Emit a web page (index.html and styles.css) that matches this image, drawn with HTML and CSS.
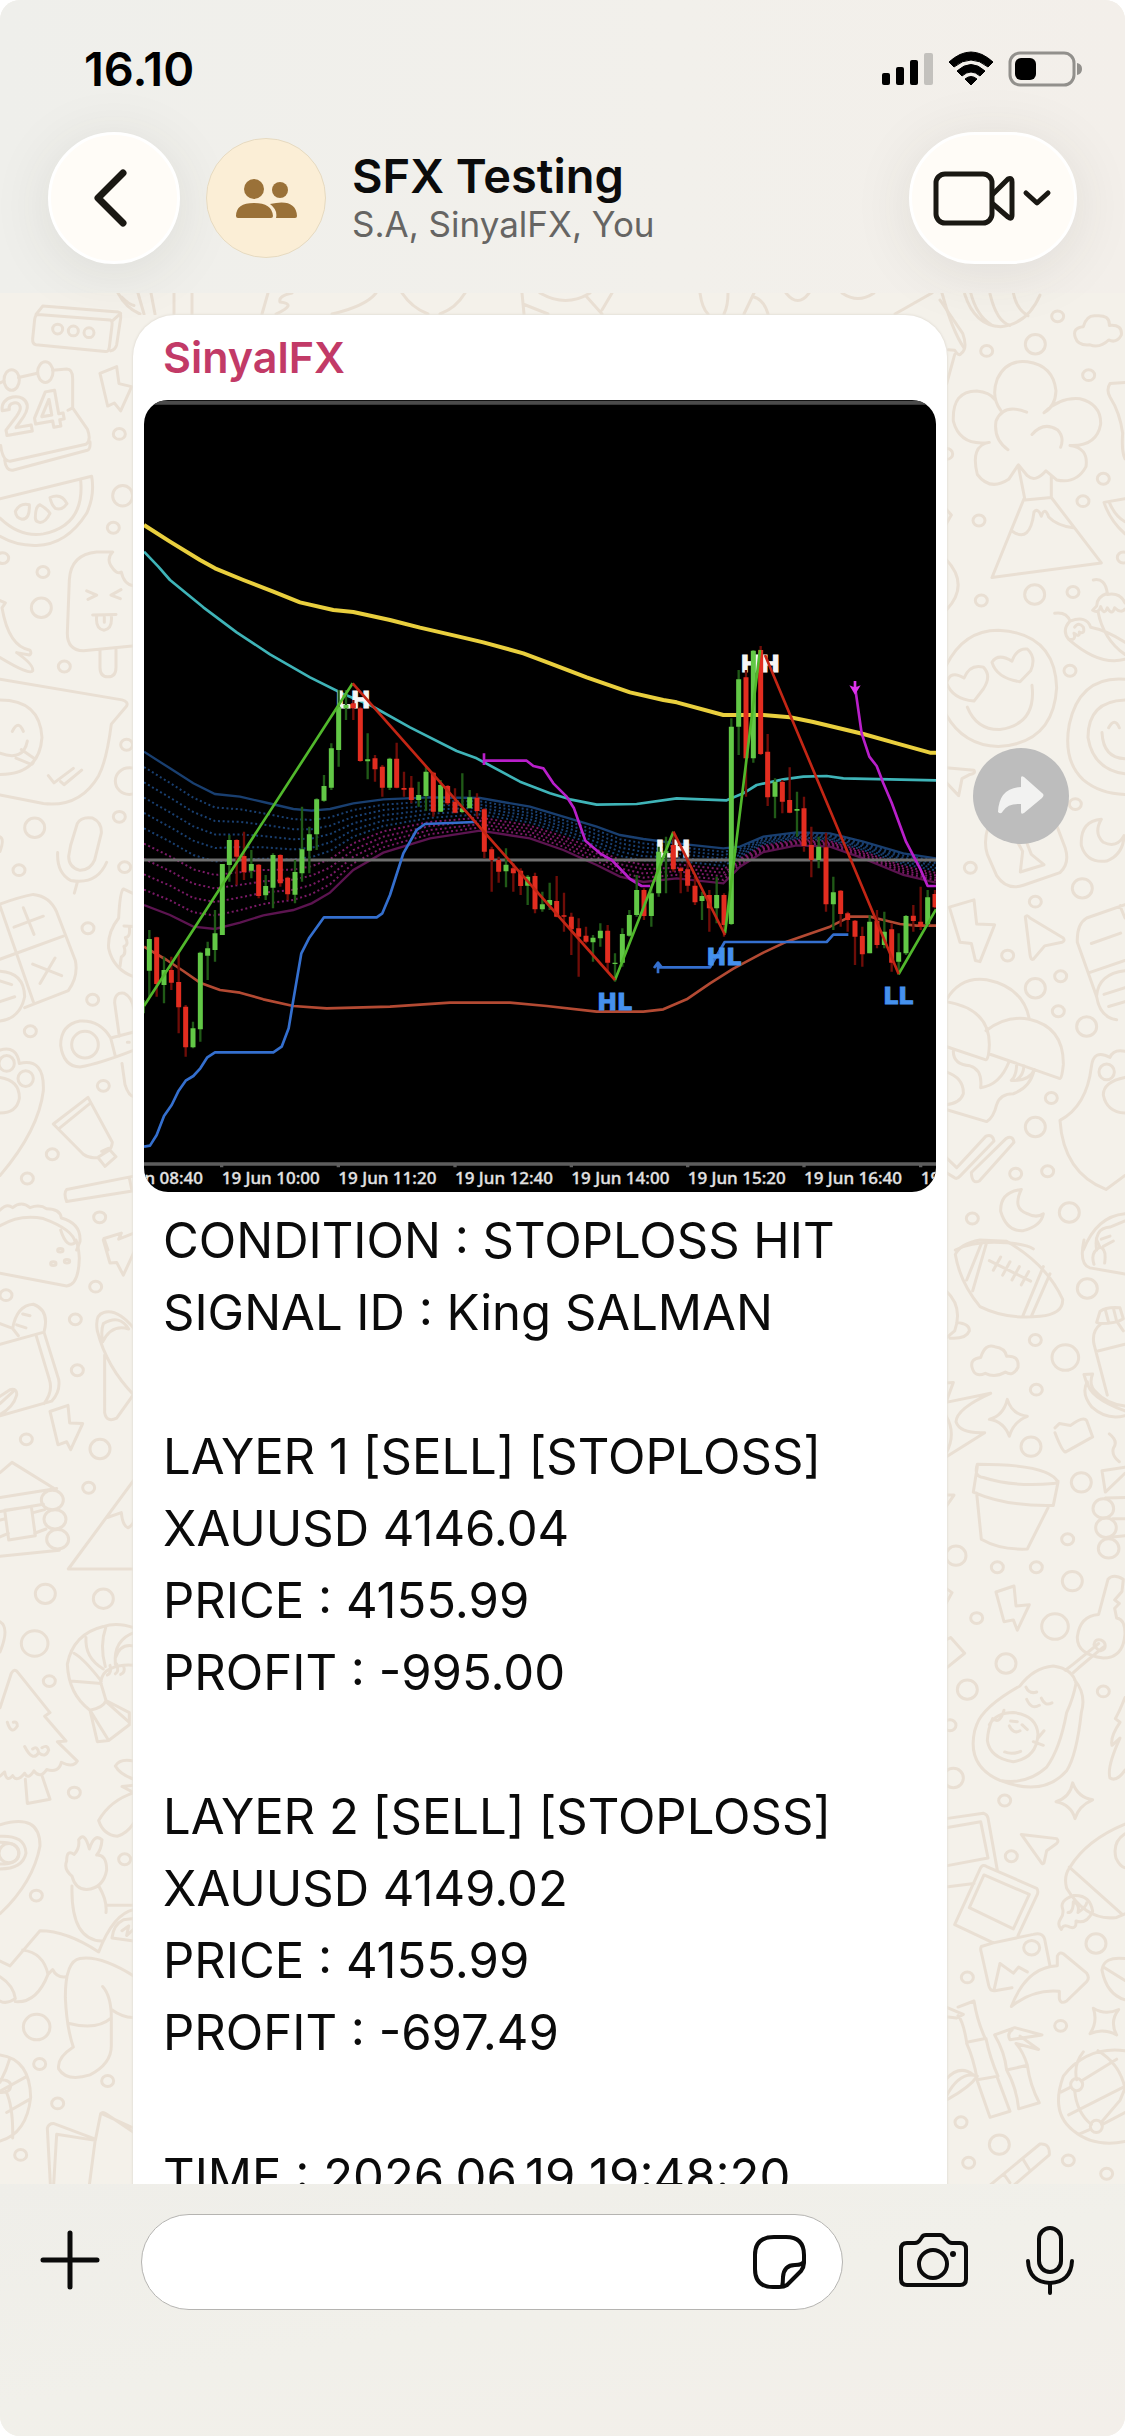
FILE: index.html
```html
<!DOCTYPE html>
<html lang="en">
<head>
<meta charset="utf-8">
<meta name="viewport" content="width=device-width, initial-scale=1">
<title>SFX Testing</title>
<link rel="stylesheet" href="styles.css">
<script src="chart.js" defer></script>
</head>
<body>
<div class="screen">
  <header class="top">
    <div class="status">
      <time class="clock">16.10</time>
      <svg class="status-icons" width="204" height="36" viewBox="881 51 204 36" aria-hidden="true">
        <rect x="882" y="73" width="8" height="12" rx="2"/>
        <rect x="896" y="67" width="8" height="18" rx="2"/>
        <rect x="910" y="60" width="8" height="25" rx="2"/>
        <rect x="924" y="53" width="9" height="32" rx="2" fill="#c3c1bd"/>
        <path d="M949 62Q971 42 993 62L988 67Q971 53 954 67ZM957 71Q971 58 985 71L980 76Q971 68 962 76ZM965 79Q971 74 977 79L971 85Z" stroke="#000" stroke-width="1" stroke-linejoin="round"/>
        <rect x="1010" y="53" width="64" height="32" rx="10" fill="none" stroke="#92908c" stroke-width="3"/>
        <rect x="1015" y="58" width="21" height="22" rx="6"/>
        <path d="M1077 63q5 1 5 6t-5 6z" fill="#92908c"/>
      </svg>
    </div>
    <div class="bar">
      <button class="glass back" type="button" aria-label="Back">
        <svg width="40" height="64" viewBox="94 166 40 64"><path d="M123 173L98 198L123 223" fill="none" stroke="#1a1813" stroke-width="7" stroke-linecap="round" stroke-linejoin="round"/></svg>
      </button>
      <div class="avatar">
        <svg width="64" height="44" viewBox="234 174 64 44" aria-hidden="true">
          <circle cx="254" cy="187" r="10"/><circle cx="280" cy="188" r="8"/>
          <path d="M236 214Q236 201 254 201T273 214Q273 216 271 216H238Q236 216 236 214ZM270 202Q296 196 297 214Q297 216 295 216H276Q278 208 270 202Z"/>
        </svg>
      </div>
      <div class="who">
        <h1 class="title">SFX Testing</h1>
        <p class="members">S.A, SinyalFX, You</p>
      </div>
      <button class="glass call" type="button" aria-label="Video call">
        <svg width="122" height="60" viewBox="932 168 122 60" fill="none" stroke="#1a1813" stroke-width="5" stroke-linejoin="round" stroke-linecap="round">
          <rect x="936" y="174" width="56" height="49" rx="9"/>
          <path d="M993 194L1008 179Q1012 177 1012 182V215Q1012 220 1008 217L993 204"/>
          <path d="M1026 193L1037 203L1048 193"/>
        </svg>
      </button>
    </div>
  </header>

  <main class="chat">
    <svg class="doodle doodle-left" width="140" height="1891" viewBox="0 293 140 1891" aria-hidden="true">
      <text class="day" x="4" y="436" transform="rotate(-10 4 436)">24</text>
      <g transform="translate(0 300) scale(.3333 .6059)">
        <path d="M104 32Q106 24 114 24L330 33Q338 34 336 42L328 78Q326 86 316 85L108 74Q97 73 98 64ZM108 24L128 10L355 20Q364 21 362 30L350 74Q346 82 332 84M338 34L362 22M365-5Q388 8 402 9"/>
        <ellipse cx="173" cy="48" rx="15" ry="8"/><ellipse cx="220" cy="51" rx="15" ry="8"/><ellipse cx="267" cy="54" rx="15" ry="8"/>
        <path d="M0 137L12 134M56 128L112 121M158 116L200 114Q218 114 218 130V178L262 213Q275 232 258 238L30 266Q8 266 2 240M204 182L218 178M14 264Q18 282 38 281L262 248Q272 246 270 234"/>
        <ellipse cx="35" cy="132" rx="23" ry="17"/><ellipse cx="136" cy="119" rx="23" ry="17"/>
        <path d="M300 121L350 110L357 138L395 143L362 183L343 170L323 175ZM0 328L275 291Q285 322 260 352Q200 404 110 405Q50 406 0 390M0 360Q60 392 130 386Q255 372 242 297"/>
        <path d="M46 349Q60 334 88 338Q90 362 66 362Q48 360 46 349ZM106 360Q106 340 120 338Q142 345 150 352Q136 368 118 367Q106 366 106 360ZM150 326Q184 318 201 336Q186 348 166 344Q154 338 150 326Z"/>
        <path d="M338 416H290Q212 420 208 462L202 550Q202 578 250 579L420 570M338 416Q320 426 332 438Q350 454 364 449Q372 470 402 472M300 577V606Q300 622 324 622T348 606V577M260 480L290 487L264 494M363 478L333 487L361 493M278 520L348 519M290 522Q286 543 312 545Q338 543 334 521M313 523V532"/>
        <path d="M0 496L16 500L6 508Q26 572 90 578Q96 584 88 586L50 582Q102 602 98 612Q90 620 0 590M0 626L366 660Q386 663 380 670L334 700Q320 760 296 785Q240 838 130 831L0 817M0 660Q120 660 126 722Q118 783 0 783M37 712Q55 692 70 712M0 748Q70 762 82 728M64 742L104 757Q98 770 88 765L48 756M145 785L162 797L220 773M182 795L192 800L245 776"/>
        <path d="M212 900L232 864Q244 852 278 855Q306 862 304 880L284 924Q270 942 238 941Q206 936 206 918ZM173 912Q170 945 212 958Q290 966 320 928M232 961L223 979M0 886Q14 890 0 910"/>
        <path d="M0 997Q60 985 100 981Q150 984 170 1010L226 1090Q236 1116 205 1140L74 1168M0 1088L190 1050M0 1000L100 1158M42 1035L130 1017M70 1003L102 1047M98 1096L185 1115M165 1086L120 1128M0 1108Q72 1110 74 1150Q60 1186 0 1190M0 1124L35 1130M0 1158L44 1150"/>
        <path d="M402 980L370 972Q360 976 356 1020Q322 1044 326 1070Q340 1105 402 1117M372 1033L402 1034M388 1034Q392 1052 376 1052Q388 1064 372 1067Q380 1080 364 1084L360 1100M402 1208L332 1218Q300 1188 240 1190Q182 1196 182 1230Q190 1265 240 1266Q300 1260 402 1238M332 1218L346 1248M358 1215L344 1160Q344 1142 372 1144Q395 1150 402 1170M366 1260L375 1295Q386 1314 402 1315M382 1225H388"/>
        <ellipse cx="255" cy="1229" rx="40" ry="22"/>
        <path d="M0 1238Q50 1230 58 1260Q134 1250 130 1305Q116 1370 0 1445M0 1283Q60 1288 58 1318Q50 1342 0 1342M160 1360L264 1316L337 1390Q336 1400 325 1404L294 1415Q270 1418 250 1410ZM176 1368L270 1326M305 1405L325 1400L348 1414L315 1430L295 1416M402 1446L200 1468Q190 1474 200 1488L402 1470M388 1449L396 1470"/>
        <ellipse cx="20" cy="1260" rx="23" ry="13"/><ellipse cx="77" cy="1285" rx="23" ry="13"/>
        <path d="M0 1502Q20 1490 38 1498Q64 1486 90 1498Q120 1492 140 1500Q180 1500 184 1515Q244 1524 240 1554L230 1568M0 1528Q60 1508 130 1516Q220 1534 226 1556Q200 1566 182 1535M402 1540L356 1550L364 1540L312 1549L324 1568"/>
        <g class="dots">
          <ellipse cx="358" cy="221" rx="18" ry="9"/><ellipse cx="368" cy="323" rx="30" ry="17"/><ellipse cx="340" cy="376" rx="18" ry="9"/><ellipse cx="8" cy="426" rx="18" ry="9"/><ellipse cx="129" cy="449" rx="18" ry="9"/><ellipse cx="124" cy="508" rx="30" ry="16"/><ellipse cx="193" cy="605" rx="18" ry="9"/><ellipse cx="380" cy="734" rx="18" ry="9"/><ellipse cx="388" cy="794" rx="42" ry="22"/><ellipse cx="358" cy="853" rx="18" ry="9"/><ellipse cx="104" cy="871" rx="30" ry="16"/><ellipse cx="57" cy="941" rx="18" ry="9"/><ellipse cx="374" cy="936" rx="18" ry="9"/><ellipse cx="264" cy="1037" rx="18" ry="9"/><ellipse cx="278" cy="1155" rx="18" ry="9"/><ellipse cx="91" cy="1207" rx="18" ry="9"/><ellipse cx="310" cy="1297" rx="18" ry="9"/><ellipse cx="157" cy="1410" rx="18" ry="9"/><ellipse cx="82" cy="1450" rx="18" ry="9"/><ellipse cx="299" cy="1514" rx="18" ry="9"/>
        </g>
      </g>
      <g transform="translate(0 1240) scale(.3333 .6059)">
        <path d="M0 55L200 76Q236 74 238 30Q236 10 228 0M310 0L330 38L350 37L370 58L402 20M0 138L38 146Q50 108 100 106Q150 116 132 152L0 172M38 146L55 158M68 122L90 125M50 140L78 145M132 152L176 230Q182 250 155 266L0 290M108 157L148 230Q160 250 132 270M0 258L30 247Q52 244 50 256Q40 276 0 288M0 270L40 250"/>
        <path d="M150 283L204 273L209 302L248 303L212 346L200 333L174 338ZM402 146Q350 112 310 120Q284 124 292 150Q320 210 402 256M314 190V285Q320 302 350 294L402 254M308 168Q336 138 386 147Q360 122 310 138Q302 150 308 168M402 396L205 543H402M322 458L364 450Q368 472 384 475Q402 470 402 460"/>
        <path d="M0 384L36 367L165 411M0 425L170 410M0 448L130 436M0 462L16 460M100 450L134 445M0 490L25 484M104 484L138 477M0 522L178 512M14 446L94 440L106 488L26 495Z"/>
        <ellipse cx="157" cy="429" rx="33" ry="16"/><ellipse cx="165" cy="461" rx="33" ry="16"/><ellipse cx="173" cy="494" rx="33" ry="16"/>
        <path d="M0 772L34 715Q44 706 54 714L150 780L134 786L198 827L172 828L232 860Q220 872 184 862Q176 880 140 874Q120 890 102 876Q84 892 74 880Q50 896 38 884Q20 896 14 878L0 885M76 890L82 930L150 923L126 884M22 796Q34 818 52 802Q52 794 40 796M74 836Q98 862 116 846Q112 834 98 840M116 846Q136 856 146 842Q142 832 126 838M0 630Q30 640 0 680"/>
        <path d="M402 640Q350 630 310 638Q220 650 202 700Q206 750 270 776L292 828L326 826L388 800V780L318 760L302 730Q306 714 330 708Q360 700 402 702M258 656Q254 690 310 708M318 638Q298 670 316 704M222 682Q250 690 304 728M212 728L304 732M270 776Q310 772 318 760M272 778L326 826M318 762L388 796M402 648Q340 660 346 700M330 702Q336 714 322 718M350 700Q358 712 346 716M370 702Q378 714 362 717M402 670Q360 665 346 690"/>
        <path d="M402 860Q360 855 346 868Q360 882 402 890M402 900L366 902L402 912Q330 925 296 958Q310 982 352 984Q380 980 402 962M0 965Q120 945 120 1000Q100 1060 0 1112M0 984Q76 982 78 1012Q68 1038 0 1038M0 994Q56 994 56 1012T0 1030"/>
        <path d="M216 1050Q190 1038 200 1025Q200 1005 222 1014Q240 1004 236 990Q254 975 268 1005Q284 978 306 990Q304 1006 290 1015Q320 1014 320 1040Q310 1070 260 1072Q226 1072 216 1050ZM216 1066Q212 1155 305 1157M296 1066Q322 1090 318 1110M320 1098L402 1098M402 1105Q340 1112 296 1175Q200 1140 120 1140L30 1198L0 1190M402 1120L370 1122Q340 1130 336 1152L402 1157M366 1140L386 1132L380 1148L400 1138M68 1172Q130 1176 144 1212Q110 1260 46 1257M0 1216Q40 1230 46 1252Q20 1262 0 1256M144 1212L158 1204Q170 1218 198 1216M402 1215Q300 1180 240 1186Q196 1190 196 1250Q200 1300 220 1332Q170 1350 176 1368Q200 1390 270 1378Q334 1360 334 1330V1284Q290 1305 208 1293M308 1232Q334 1248 334 1284M334 1270Q370 1284 402 1283"/>
        <path d="M0 1345Q90 1352 92 1415Q80 1475 0 1487M0 1405L75 1382M20 1440L90 1418M0 1386Q34 1386 32 1397T0 1407M18 1405Q40 1430 38 1482M0 1390Q20 1370 30 1350M152 1568L142 1466Q146 1458 160 1458L286 1484L268 1560M160 1568L170 1476L286 1486L302 1442Q308 1438 318 1442L402 1473M310 1443L402 1466"/>
        <ellipse cx="27" cy="1012" rx="30" ry="16"/>
        <g class="dots">
          <ellipse cx="181" cy="17" rx="8" ry="3"/><ellipse cx="160" cy="39" rx="8" ry="3"/><ellipse cx="201" cy="35" rx="8" ry="3"/><ellipse cx="18" cy="91" rx="18" ry="9"/><ellipse cx="287" cy="77" rx="18" ry="9"/><ellipse cx="226" cy="131" rx="18" ry="9"/><ellipse cx="232" cy="215" rx="18" ry="9"/><ellipse cx="79" cy="329" rx="18" ry="9"/><ellipse cx="300" cy="345" rx="30" ry="16"/><ellipse cx="266" cy="409" rx="18" ry="9"/><ellipse cx="136" cy="584" rx="30" ry="16"/><ellipse cx="310" cy="592" rx="30" ry="16"/><ellipse cx="104" cy="666" rx="40" ry="21"/><ellipse cx="148" cy="728" rx="18" ry="9"/><ellipse cx="223" cy="912" rx="18" ry="9"/><ellipse cx="374" cy="1022" rx="18" ry="9"/><ellipse cx="109" cy="1082" rx="18" ry="9"/><ellipse cx="110" cy="1299" rx="40" ry="21"/><ellipse cx="119" cy="1360" rx="18" ry="9"/><ellipse cx="323" cy="1388" rx="18" ry="9"/><ellipse cx="173" cy="1425" rx="18" ry="9"/><ellipse cx="62" cy="1510" rx="18" ry="9"/>
        </g>
      </g>
    </svg>
    <svg class="doodle doodle-top" width="800" height="22" viewBox="110 293 800 22" aria-hidden="true">
      <path d="M118 293Q126 308 140 314M138 293L144 314M151 293L155 314M174 293V314M192 293V314M268 293L262 314M292 293Q278 296 280 302Q298 304 276 314M376 293Q366 306 332 314M402 293Q412 308 428 314M465 293Q456 308 440 314M522 293L524 314M540 293Q566 308 590 293M523 304L548 314M586 296L602 314M612 293L602 310M700 293Q702 308 708 314M728 293Q728 306 724 314M754 293L744 314M754 297Q764 300 768 314M786 293Q798 308 809 293M842 293Q858 304 874 293"/>
    </svg>
    <svg class="doodle doodle-right" width="235" height="1891" viewBox="890 293 235 1891" aria-hidden="true">
      <path d="M895 314L932 293M942 293Q952 330 964 348"/>
      <g transform="translate(940 300) scale(.3333 .6059)">
        <path d="M0 0L68 55Q84 80 64 88Q56 94 44 83L25 82M44 90L20 138M74-10Q104 42 182 44Q262 40 300-8M92-12Q110 26 152 40M150-10Q170 36 210 42M220-12Q230 16 264 26M406 62Q396 46 430 44Q440 24 468 26Q510 24 508 42Q548 40 544 58Q530 72 506 66Q480 80 450 74Q414 76 406 62Z"/>
        <path d="M182 182Q152 160 172 130Q200 98 262 102Q340 108 348 150Q346 176 312 186Q360 160 420 163Q484 172 482 205Q470 242 390 240Q446 244 438 275Q410 304 350 297L318 282Q286 302 262 290L235 272L206 296Q150 316 112 288Q90 240 148 235Q60 242 40 200Q36 150 110 150Q150 152 164 164M260 185Q190 170 168 200Q160 230 204 247M276 222Q310 200 352 214Q374 226 362 243M235 274L255 330L334 326V290M252 328L156 458L484 434L334 326M218 382Q270 402 282 350Q294 342 304 357Q314 340 326 358Q350 372 400 376M18 428Q90 470 20 511M18 345L34 355L18 370M555 136L510 138Q498 148 510 160Q540 186 548 220Q544 250 555 262M555 328L492 334Q510 364 555 386M508 334Q524 356 555 366"/>
        <path d="M460 462Q496 458 502 484Q470 490 470 505L458 512Q476 518 482 506Q492 522 502 508Q516 522 524 508Q544 518 555 510M502 486Q540 482 555 500M474 514Q490 560 555 585M344 517Q380 514 390 530Q440 520 452 540Q500 545 555 565M390 530Q364 545 386 560Q480 605 555 593M386 560Q410 562 402 550Q420 558 418 548Q436 552 430 540Q416 530 404 540"/>
        <path d="M18 604Q70 545 175 545Q345 550 350 640Q340 732 175 737Q70 735 18 684M20 632Q30 610 72 624Q90 600 130 606Q156 620 130 642L102 662Q36 658 20 632ZM156 598Q174 582 216 596Q230 574 262 576Q290 590 272 612L240 630Q170 624 156 598ZM82 672Q110 710 180 709Q290 700 276 636M555 626Q420 620 388 700Q368 760 430 792Q480 815 555 816M555 660Q444 662 444 722Q460 775 555 782M486 714Q490 756 555 757M506 706Q524 688 538 706M18 772L102 776Q108 782 90 783L66 790L56 818L18 796"/>
        <path d="M144 870Q130 895 142 915L170 950Q200 975 250 966L360 945Q390 930 376 905L352 870M235 897L248 910L241 944L312 932L274 915L262 898M484 857Q420 860 424 900Q440 930 500 926Q550 915 552 884Q530 906 490 895Q460 880 484 857ZM28 1002L102 990L110 1030L164 1031L120 1092L106 1090L94 1062L60 1060ZM256 1018Q262 1014 270 1020L370 1053Q376 1058 366 1060L314 1066L280 1088Q272 1090 270 1080Z"/>
        <path d="M555 998L440 1020Q410 1030 412 1060L470 1150Q480 1184 530 1188M448 1110L555 1090M540 1000L555 1020M454 1062L542 1045M555 1107Q476 1112 470 1148M492 1146L555 1135M506 1166L555 1158M18 1156Q60 1116 140 1122Q250 1134 268 1187M18 1158Q150 1170 148 1230Q146 1254 138 1254L18 1232M138 1206Q200 1180 268 1187Q372 1200 370 1262Q366 1285 360 1285L146 1244M40 1240Q40 1262 90 1264Q128 1270 122 1300Q180 1296 208 1256M230 1260Q230 1280 214 1288Q266 1290 284 1270M252 1264Q250 1280 230 1287M18 1274Q72 1284 70 1310Q60 1326 18 1328M18 1336L140 1356Q160 1350 170 1328Q180 1310 220 1310Q270 1300 282 1272"/>
        <path d="M18 1415L50 1432L138 1380Q158 1376 162 1388L60 1446Q50 1452 42 1448L18 1440M94 1440L198 1384Q218 1378 222 1390L118 1454Q96 1460 94 1440ZM555 1240Q520 1236 510 1250Q460 1235 454 1266Q440 1330 360 1354Q370 1440 498 1468L555 1445M555 1283Q490 1290 490 1312Q500 1340 555 1342M244 1468Q180 1472 182 1504Q200 1538 250 1536Q304 1528 310 1508Q290 1516 262 1508Q216 1500 244 1468ZM46 1568Q100 1552 200 1556Q260 1558 280 1566M430 1568Q470 1512 555 1508M470 1568Q460 1532 510 1530L555 1520M484 1550L510 1545M490 1562L520 1553"/>
        <ellipse cx="500" cy="1274" rx="23" ry="13"/>
        <g class="dots">
          <ellipse cx="353" cy="27" rx="18" ry="9"/><ellipse cx="286" cy="73" rx="30" ry="16"/><ellipse cx="140" cy="84" rx="18" ry="9"/><ellipse cx="446" cy="124" rx="18" ry="9"/><ellipse cx="20" cy="254" rx="18" ry="9"/><ellipse cx="490" cy="295" rx="18" ry="9"/><ellipse cx="429" cy="332" rx="18" ry="9"/><ellipse cx="117" cy="364" rx="18" ry="9"/><ellipse cx="550" cy="425" rx="18" ry="9"/><ellipse cx="399" cy="482" rx="18" ry="9"/><ellipse cx="284" cy="486" rx="30" ry="16"/><ellipse cx="124" cy="496" rx="18" ry="9"/><ellipse cx="390" cy="612" rx="18" ry="9"/><ellipse cx="406" cy="832" rx="18" ry="9"/><ellipse cx="91" cy="937" rx="18" ry="9"/><ellipse cx="427" cy="971" rx="30" ry="16"/><ellipse cx="286" cy="993" rx="18" ry="9"/><ellipse cx="203" cy="1082" rx="18" ry="9"/><ellipse cx="362" cy="1116" rx="18" ry="9"/><ellipse cx="286" cy="1136" rx="30" ry="16"/><ellipse cx="355" cy="1174" rx="18" ry="9"/><ellipse cx="440" cy="1199" rx="30" ry="16"/><ellipse cx="334" cy="1317" rx="18" ry="9"/><ellipse cx="286" cy="1365" rx="30" ry="16"/><ellipse cx="227" cy="1442" rx="18" ry="9"/><ellipse cx="323" cy="1438" rx="18" ry="9"/><ellipse cx="97" cy="1516" rx="18" ry="9"/><ellipse cx="388" cy="1506" rx="30" ry="16"/>
        </g>
      </g>
      <g transform="translate(940 1240) scale(.3333 .6059)">
        <path d="M46 24Q60 6 120 0L200 2Q320 40 368 98Q370 122 300 126Q200 132 120 110Q60 70 46 24ZM124 6L80 66M140 4L98 84M310 44L248 126M330 56L274 126M148 34L272 68M182 28L160 50M210 36L188 58M238 44L216 66M266 52L244 74M18 84Q70 110 44 150L18 162M50 136Q90 138 88 150Q78 164 30 162M432 0Q416 40 450 46L555 56M462 40Q450 20 480 12L470 0M480 12Q500 14 494 38M96 210Q90 196 122 194Q136 170 164 176Q196 178 200 192Q238 190 234 210Q220 226 196 218Q164 228 136 220Q104 228 96 210Z"/>
        <path d="M470 136L480 118Q500 110 540 112L550 130Q530 138 480 138ZM496 115L506 136M520 112L530 134M484 138Q454 150 462 172L502 256M530 134L550 150M468 184L555 172M432 222L458 221Q444 240 470 252Q500 270 555 274M432 222L440 236Q424 255 456 276Q500 298 555 290M442 234Q446 260 555 282M148 296Q190 290 202 263Q216 288 262 291Q220 300 208 324Q192 300 148 296ZM345 310L358 303L392 306Q430 290 440 298L458 325L376 350Q366 348 345 318M18 236L40 235L18 268L152 253Q50 278 48 300Q60 320 134 318L18 358M18 290Q50 320 18 352M112 374L100 416Q200 440 340 438L354 400Q330 370 112 370Q100 390 130 392Q220 408 340 402Q350 402 354 398M110 418L124 494Q180 512 262 510L324 442M508 320Q536 332 520 344Q514 356 538 366M555 375L486 381L496 416L555 385M496 426L555 425M518 460H555M518 490L555 488"/>
        <ellipse cx="490" cy="443" rx="31" ry="16"/><ellipse cx="498" cy="475" rx="31" ry="16"/><ellipse cx="506" cy="509" rx="31" ry="16"/>
        <path d="M18 421L42 421L18 440M18 575L36 582L18 600M18 660L32 656L74 682L18 707M168 581L222 571L228 604L268 602L232 644L220 627L192 630ZM476 618L504 560Q520 550 550 560L546 580L524 594L538 600L524 608L530 624Q555 626 555 650Q550 690 490 690Q410 684 412 655Q420 620 476 618ZM376 710L400 700L476 666M400 714L416 706L490 672M462 668Q464 658 482 660Q500 664 494 674Q480 684 462 668Z"/>
        <path d="M110 800Q130 770 240 736Q280 706 340 703Q400 708 408 732Q400 756 380 780Q360 840 320 870Q260 900 180 892Q80 868 104 810ZM404 726Q440 750 424 780Q410 850 380 876Q310 920 180 892M258 738Q268 750 290 746M260 758Q274 776 298 768M304 756Q314 770 336 764M148 800Q170 780 220 780Q290 784 294 816Q290 855 220 861Q150 855 142 826Q144 806 158 790Q180 800 192 776M208 802Q220 816 240 810M212 794L232 795M246 800L262 808M194 845Q216 850 242 844M294 822L312 810M280 828L310 834M555 755Q540 776 526 790L540 796Q510 820 516 834L540 822Q500 870 510 888Q530 895 555 875"/>
        <path d="M348 927Q390 920 398 896Q414 920 458 924Q416 934 405 955Q394 932 348 927ZM18 955L130 946Q142 948 144 954L172 1040M18 970L122 960L144 1020L18 1033M18 1068L102 1062M244 981L350 988Q358 992 350 996L320 1008L312 1028Q308 1032 302 1026ZM122 1036Q128 1030 140 1034L290 1070Q296 1074 292 1080L234 1148M122 1036L44 1130L160 1160L280 1146Q308 1142 314 1154L330 1198M132 1048L268 1080L220 1137L88 1102ZM160 1160L124 1166Q120 1170 124 1176L146 1230Q150 1240 164 1239L216 1234M162 1238L180 1194L220 1210L236 1200L262 1208"/>
        <path d="M214 1265Q260 1200 352 1198V1182Q358 1174 370 1178L440 1210Q450 1218 440 1224L380 1256Q362 1262 358 1252V1240Q280 1236 214 1265ZM555 964Q440 990 390 1035Q370 1050 380 1070Q440 1125 530 1118L555 1112M388 1035L545 1112M555 980Q516 994 528 1020Q540 1034 555 1036M400 1082Q358 1090 368 1104Q372 1112 362 1120Q350 1130 364 1138Q370 1128 390 1134Q410 1138 408 1124Q440 1130 458 1108Q450 1080 400 1082ZM384 1110Q400 1110 400 1092Q420 1096 414 1110Q440 1100 440 1094M555 1186Q490 1182 486 1205Q500 1245 555 1254M490 1200L555 1222M460 1268Q496 1280 536 1270Q508 1290 530 1312Q490 1300 450 1310Q474 1290 460 1268Z"/>
        <path d="M18 1266L70 1278L50 1284L18 1282M54 1266L102 1256Q112 1290 136 1318L80 1324Q70 1290 54 1280M80 1326Q100 1350 112 1386L174 1380Q150 1350 138 1318M112 1388L150 1448L210 1438L172 1382M18 1414Q60 1370 112 1380Q90 1398 24 1418M18 1385Q60 1360 100 1378M164 1312L224 1300L306 1312L210 1320Q200 1310 216 1304M164 1312Q194 1340 200 1370L262 1362Q250 1340 228 1326L296 1336L240 1314M200 1370Q230 1400 236 1434L298 1424Q270 1395 262 1362M555 1338Q440 1330 370 1380Q330 1440 400 1470Q460 1498 555 1488M364 1406L392 1398M424 1388L530 1352M386 1444L555 1397M416 1476L450 1468M486 1460L555 1440M430 1340Q400 1360 410 1386M404 1404Q410 1440 454 1460M474 1338Q540 1360 555 1400M484 1456L540 1420L555 1400M150 1560L300 1492Q330 1490 328 1510L222 1560M250 1518L268 1534M192 1542L210 1556"/>
        <g class="dots">
          <ellipse cx="410" cy="1394" rx="18" ry="10"/><ellipse cx="469" cy="1463" rx="18" ry="10"/><ellipse cx="275" cy="1168" rx="24" ry="12"/><ellipse cx="442" cy="80" rx="30" ry="16"/><ellipse cx="286" cy="165" rx="18" ry="9"/><ellipse cx="376" cy="194" rx="40" ry="21"/><ellipse cx="289" cy="247" rx="18" ry="9"/><ellipse cx="273" cy="341" rx="30" ry="16"/><ellipse cx="424" cy="400" rx="30" ry="16"/><ellipse cx="383" cy="494" rx="18" ry="9"/><ellipse cx="48" cy="521" rx="30" ry="16"/><ellipse cx="172" cy="540" rx="18" ry="9"/><ellipse cx="289" cy="540" rx="18" ry="9"/><ellipse cx="397" cy="563" rx="30" ry="16"/><ellipse cx="110" cy="624" rx="18" ry="9"/><ellipse cx="345" cy="638" rx="40" ry="21"/><ellipse cx="198" cy="699" rx="30" ry="16"/><ellipse cx="82" cy="742" rx="30" ry="16"/><ellipse cx="490" cy="745" rx="18" ry="9"/><ellipse cx="30" cy="801" rx="18" ry="9"/><ellipse cx="40" cy="888" rx="30" ry="16"/><ellipse cx="194" cy="925" rx="18" ry="9"/><ellipse cx="214" cy="1017" rx="18" ry="9"/><ellipse cx="468" cy="1161" rx="30" ry="16"/><ellipse cx="82" cy="1217" rx="18" ry="9"/><ellipse cx="362" cy="1297" rx="18" ry="9"/><ellipse cx="63" cy="1456" rx="18" ry="9"/><ellipse cx="178" cy="1493" rx="30" ry="16"/><ellipse cx="86" cy="1523" rx="18" ry="9"/><ellipse cx="385" cy="1519" rx="18" ry="9"/><ellipse cx="500" cy="1541" rx="18" ry="9"/>
        </g>
      </g>
    </svg>

    <article class="bubble">
      <h2 class="sender">SinyalFX</h2>
      <div class="picture">
        <svg class="chart" viewBox="42 30 2376 2376" role="img" aria-label="XAUUSD candlestick chart">
          <path d="M42 38H2418" stroke="#4b4b4b" stroke-width="12"/>
          <g id="bands" fill="none" stroke-width="6"></g>
          <path d="M42 1410H2418" stroke="#6e6e6e" stroke-width="9"/>
          <path class="line" stroke="#b34a33" d="M42 1670L110 1710L160 1743L210 1778L270 1800L330 1808L400 1828L490 1848L590 1855L780 1850L960 1838L1140 1838L1250 1848L1400 1865H1540L1600 1858L1670 1828L1740 1780L1810 1736L1900 1688L1970 1655L2100 1610L2160 1580H2220L2260 1590L2310 1602L2360 1607H2418"/>
          <path class="line bold" stroke="#e9cf3e" d="M42 405L120 455L210 510L255 535L340 570L430 605L510 637L610 660L670 666L780 690L870 713L1000 743L1060 757L1180 790L1260 820L1370 862L1500 907L1600 930L1640 937L1780 975H1900L1980 982L2050 996L2200 1032L2300 1060L2400 1088H2418"/>
          <path class="line" stroke="#3fb4b8" d="M42 485L85 530L120 570L220 652L320 727L420 793L540 862L640 912L720 945L840 1012L980 1083L1040 1105L1170 1175L1260 1210L1320 1228L1400 1244L1520 1242L1640 1225L1790 1231L1840 1210L1880 1185L1960 1168L2020 1160L2090 1158L2140 1165L2418 1171"/>
          <path class="line" stroke="#346fce" d="M42 2270L60 2267L80 2235L102 2178L125 2145L146 2102L167 2072L190 2058L211 2035L232 2002L255 1987H430L455 1970L476 1915L490 1830L514 1690L538 1643L582 1582H740L757 1570L780 1515L820 1390L860 1320L885 1302L1035 1296"/>
          <path class="line" stroke="#346fce" d="M1584 1732H1740L1784 1656H2090L2110 1634H2155M1584 1750V1718M1572 1734L1584 1718L1597 1734"/>
          <path class="line" stroke="#b91fca" d="M1062 1090V1125M1062 1112H1190L1210 1128L1240 1135L1270 1180L1310 1220L1332 1255L1366 1352L1410 1390L1445 1410L1500 1467L1535 1488H1560M2175 890L2195 1030L2218 1100L2240 1128L2260 1180L2285 1238L2328 1355L2370 1435L2393 1488H2418"/>
          <path d="M2175 914L2158 886L2171 891V873H2179V891L2192 886Z" fill="#df34ef"/>
          <g class="tag hi">
            <text x="669" y="955">LH</text><text x="1629" y="1402">LH</text><text x="1891" y="845">HH</text>
          </g>
          <g class="tag lo">
            <text x="1454" y="1859">HL</text><text x="1782" y="1725">HL</text><text x="2305" y="1842">LL</text>
          </g>
          <g id="candles" fill="none"></g>
          <path class="line" stroke="#51b82c" d="M42 1848L668 880M1455 1770L1630 1325M1785 1630L1890 780M2306 1752L2418 1558"/>
          <path class="line" stroke="#c32615" d="M668 880L1455 1770M1630 1325L1785 1635M1905 795L2306 1752"/>
          <path d="M42 2322H2418M275 2322V2332M625 2322V2332M975 2322V2332M1324 2322V2332M1673 2322V2332M2022 2322V2332M2372 2322V2332" stroke="#5d5d5d" stroke-width="10"/>
          <g class="axis">
            <text x="-75" y="2382">19 Jun 08:40</text><text x="275" y="2382">19 Jun 10:00</text><text x="625" y="2382">19 Jun 11:20</text><text x="975" y="2382">19 Jun 12:40</text><text x="1324" y="2382">19 Jun 14:00</text><text x="1673" y="2382">19 Jun 15:20</text><text x="2022" y="2382">19 Jun 16:40</text><text x="2372" y="2382">19 Jun 18:00</text>
          </g>
        </svg>
      </div>
      <p class="message">CONDITION : STOPLOSS HIT
SIGNAL ID : King SALMAN

LAYER 1 [SELL] [STOPLOSS]
XAUUSD 4146.04
PRICE : 4155.99
PROFIT : -995.00

LAYER 2 [SELL] [STOPLOSS]
XAUUSD 4149.02
PRICE : 4155.99
PROFIT : -697.49

TIME : 2026.06.19 19:48:20</p>
    </article>
    <button class="forward" type="button" aria-label="Forward">
      <svg width="48" height="42" viewBox="0 0 48 42"><path d="M24 3Q24 0 27 2L45 18Q48 20 45 23L27 38Q24 40 24 37V29Q11 28 6 36Q4 40 1 37Q2 13 24 12Z" fill="#f2f2f1"/></svg>
    </button>
  </main>

  <form class="composer">
    <button class="tool" type="button" aria-label="Attach">
      <svg width="60" height="60" viewBox="40 2230 60 60" fill="none" stroke="#0b0b0b" stroke-width="5" stroke-linecap="round"><path d="M43 2260H97M70 2233V2287"/></svg>
    </button>
    <div class="field">
      <input class="entry" type="text" aria-label="Message">
      <button class="tool" type="button" aria-label="Stickers">
        <svg width="56" height="58" viewBox="752 2232 56 58" fill="none" stroke="#0b0b0b" stroke-width="4" stroke-linejoin="round"><path d="M775 2236H787Q805 2236 805 2254V2262Q805 2266 802 2270L788 2284Q785 2286 780 2286H774Q756 2286 756 2268V2254Q756 2236 775 2236ZM783 2286Q784 2282 784 2276Q785 2264 796 2264Q804 2264 805 2260"/></svg>
      </button>
    </div>
    <button class="tool camera" type="button" aria-label="Camera">
      <svg width="70" height="58" viewBox="899 2230 70 58" fill="none" stroke="#0b0b0b" stroke-width="4" stroke-linejoin="round"><path d="M907 2242H915Q918 2242 920 2239L922 2236Q923 2234 926 2234H940Q943 2234 944 2236L947 2239Q949 2242 952 2242H960Q966 2242 966 2248V2278Q966 2284 960 2284H907Q901 2284 901 2278V2248Q901 2242 907 2242Z"/><circle cx="933" cy="2263" r="14"/><circle cx="953" cy="2253" r="3" fill="#0b0b0b" stroke="none"/></svg>
    </button>
    <button class="tool mic" type="button" aria-label="Voice message">
      <svg width="50" height="72" viewBox="1025 2223 50 72" fill="none" stroke="#0b0b0b" stroke-width="4" stroke-linecap="round"><rect x="1039" y="2227" width="22" height="44" rx="11"/><path d="M1028 2260Q1029 2281 1050 2282Q1071 2281 1072 2260M1050 2282V2292"/></svg>
    </button>
  </form>
</div>
</body>
</html>
```
FILE: styles.css
```css
* { box-sizing: border-box; }

body {
  margin: 0;
  background: #fff;
  color: #0b0b0b;
  font-family: Inter, "Liberation Sans", sans-serif;
}

h1, h2, p { margin: 0; font-weight: 400; }

button {
  padding: 0;
  border: 0;
  background: none;
  color: inherit;
  display: flex;
  align-items: center;
  justify-content: center;
}

.screen {
  height: 100vh;
  display: flex;
  flex-direction: column;
  overflow: hidden;
  border-radius: 20px;
  background: #f4f1ea;
}

/* Header */
.top {
  position: relative;
  z-index: 1;
  padding: 48px 48px 29px;
  background: linear-gradient(90deg, #efefeb, #f2f0eb 60%, #f3efea);
}

.status {
  height: 42px;
  margin: 0 -8px 42px 36px;
  display: flex;
  align-items: center;
  justify-content: space-between;
}

.clock {
  font-size: 47px;
  line-height: 42px;
  font-weight: 600;
  color: #000;
}

.bar { display: flex; align-items: center; }

.glass {
  height: 132px;
  border: 3px solid #fff;
  border-radius: 66px;
  background: #fffcf7;
  box-shadow: 0 8px 60px rgba(60, 60, 50, .1);
}

.back { width: 132px; }
.call { width: 168px; }

.avatar {
  width: 120px;
  height: 120px;
  margin: 0 26px;
  border: 1px solid #e6dac1;
  border-radius: 50%;
  background: #fbeed6;
  fill: #9a7138;
  display: flex;
  align-items: center;
  justify-content: center;
}

.who { flex: 1; padding-bottom: 2px; }

.title {
  font-size: 47px;
  line-height: 54px;
  font-weight: 600;
}

.members {
  font-size: 35px;
  line-height: 42px;
  color: #666563;
}

/* Conversation */
.chat {
  position: relative;
  flex: 1;
  min-height: 0;
  overflow: hidden;
  padding: 22px 56px 0 133px;
  display: flex;
  align-items: flex-start;
  gap: 26px;
}

.doodle {
  position: absolute;
  top: 0;
  fill: none;
  stroke: #e9dfd3;
  stroke-width: 3;
  stroke-linejoin: round;
  stroke-linecap: round;
}

.doodle * { vector-effect: non-scaling-stroke; }
.doodle-left { left: 0; }
.doodle-top { left: 110px; }
.doodle-right { right: 0; }

.day {
  font-size: 50px;
  font-weight: 700;
}

.bubble {
  position: relative;
  flex: 1;
  min-width: 0;
  padding: 10px 11px 40px;
  border-radius: 42px;
  background: #fff;
  box-shadow: 0 0 2px 1px #e6e2da;
}

.sender {
  padding: 0 19px;
  font-size: 43px;
  line-height: 64px;
  font-weight: 600;
  color: #c23a67;
}

.picture {
  margin-top: 11px;
  border-radius: 24px;
  overflow: hidden;
  background: #000;
}

.chart { display: block; width: 100%; }

.line { fill: none; stroke-width: 8; stroke-linejoin: round; }
.bold { stroke-width: 12; }

.tag {
  font: 700 71px "DejaVu Sans", sans-serif;
  text-anchor: middle;
  stroke-width: 3;
}

.hi { fill: #f6f6f6; stroke: #f6f6f6; }
.lo { fill: #4591ee; stroke: #4591ee; }

.axis {
  font: 500 51px "Noto Sans", sans-serif;
  fill: #e2e2e2;
  stroke: #e2e2e2;
  stroke-width: 1;
}

.message {
  padding: 13px 19px 0;
  font-size: 49px;
  line-height: 72px;
  white-space: pre-wrap;
}

.forward {
  position: relative;
  flex: none;
  width: 96px;
  height: 96px;
  margin-top: 433px;
  border-radius: 50%;
  background: #bdbdbd;
}

/* Composer */
.composer {
  flex: none;
  height: 252px;
  padding: 30px 50px 0 40px;
  display: flex;
  align-items: flex-start;
  background: linear-gradient(170deg, #efeee9, #f1f0ea 50%, #f3efea);
}

.tool { flex: none; height: 92px; }

.field {
  flex: 1;
  min-width: 0;
  height: 96px;
  margin: 0 56px 0 41px;
  padding: 0 35px 0 40px;
  display: flex;
  align-items: center;
  border: 1px solid #b5b4b1;
  border-radius: 48px;
  background: #fff;
}

.entry {
  flex: 1;
  min-width: 0;
  border: 0;
  outline: 0;
  background: none;
  font: inherit;
  font-size: 45px;
}

.camera { margin-right: 56px; }
```
FILE: chart.js
```js
// Candles: x, wick top, wick bottom, body top, body bottom; a negative x marks a falling candle.
const candles = `36 1735 1915 1830 1870,58 1620 1820 1647 1742,-80 1640 1820 1642 1782,102 1700 1840 1740 1785,-124 1700 1800 1740 1778,-146 1690 1930 1776 1852,-167 1845 2000 1850 1972,189 1895 1975 1915 1972,211 1685 1955 1688 1918,233 1655 1770 1675 1697,255 1560 1715 1630 1680,277 1422 1635 1422 1635,298 1335 1475 1350 1425,-320 1348 1485 1350 1400,-342 1325 1470 1398 1447,364 1380 1465 1422 1442,-386 1422 1525 1424 1518,407 1455 1530 1488 1516,429 1390 1555 1395 1493,-451 1393 1490 1395 1480,-473 1460 1530 1463 1513,495 1410 1540 1446 1514,516 1250 1475 1378 1450,538 1310 1450 1333 1382,560 1225 1380 1228 1333,582 1155 1235 1188 1232,604 1060 1200 1075 1193,626 900 1130 950 1080,648 900 990 945 955,-670 930 990 940 955,-691 950 1115 955 1113,713 1030 1168 1108 1114,-735 1095 1175 1105 1138,-757 1125 1220 1130 1193,779 1103 1200 1106 1193,-800 1058 1195 1106 1193,-822 1145 1220 1194 1199,-844 1158 1240 1193 1230,866 1175 1250 1215 1230,888 1128 1262 1145 1218,-910 1145 1280 1148 1265,932 1170 1265 1185 1265,-953 1185 1245 1188 1240,-975 1195 1270 1235 1268,997 1150 1270 1255 1266,1019 1200 1255 1222 1255,-1041 1210 1280 1223 1263,-1063 1255 1405 1258 1385,-1085 1370 1505 1378 1410,-1106 1400 1478 1410 1445,1128 1375 1492 1424 1444,-1150 1420 1505 1435 1450,-1172 1435 1515 1442 1488,1193 1455 1545 1460 1487,-1215 1448 1570 1458 1558,1237 1505 1565 1543 1558,1259 1478 1560 1530 1546,-1280 1458 1582 1533 1580,-1302 1508 1625 1576 1580,-1324 1568 1695 1580 1618,-1346 1585 1760 1615 1640,-1368 1610 1660 1637 1655,1389 1635 1715 1643 1657,1411 1600 1670 1622 1645,-1433 1605 1745 1622 1718,1455 1690 1775 1718 1722,1477 1615 1730 1632 1718,1498 1560 1640 1575 1637,1520 1455 1580 1500 1575,-1542 1495 1590 1500 1578,1564 1490 1610 1510 1578,1586 1370 1520 1385 1510,1608 1340 1510 1384 1389,-1630 1335 1445 1365 1438,-1652 1430 1510 1435 1443,-1673 1410 1505 1438 1487,-1695 1460 1545 1487 1537,1716 1505 1590 1518 1533,-1738 1500 1625 1515 1555,1760 1460 1600 1515 1555,-1782 1510 1640 1515 1605,1804 985 1605 1010 1602,1826 840 1095 868 1010,-1848 840 1220 862 1105,1870 780 1118 782 1105,-1892 768 1095 780 1092,-1913 1032 1248 1085 1222,1935 1165 1285 1175 1220,-1957 1170 1270 1176 1235,-1979 1132 1270 1230 1268,2001 1205 1340 1257 1262,-2022 1220 1385 1255 1368,-2044 1310 1462 1365 1410,2066 1340 1435 1370 1410,-2088 1328 1565 1372 1543,2110 1460 1620 1507 1543,-2132 1500 1610 1502 1572,-2153 1565 1625 1570 1590,-2175 1590 1725 1592 1640,-2197 1610 1730 1638 1693,2219 1575 1690 1595 1690,-2241 1560 1675 1592 1665,2263 1565 1675 1625 1665,-2285 1600 1745 1618 1718,2306 1630 1755 1687 1715,2328 1575 1695 1578 1690,-2350 1545 1625 1577 1593,-2372 1490 1620 1595 1610,2393 1500 1610 1522 1602,-2415 1500 1555 1512 1552`;

// Ribbon of moving averages: x, upper edge, lower edge.
const ribbon = [
  [42, 1085, 1545], [120, 1135, 1575], [190, 1180, 1610], [255, 1212, 1617], [330, 1220, 1598],
  [400, 1236, 1576], [490, 1257, 1560], [545, 1262, 1540], [600, 1257, 1508], [670, 1240, 1440],
  [760, 1228, 1388], [900, 1222, 1345], [1050, 1224, 1322], [1200, 1250, 1345], [1300, 1280, 1380],
  [1400, 1310, 1425], [1470, 1335, 1460], [1540, 1347, 1476], [1640, 1360, 1465], [1780, 1375, 1480],
  [1830, 1370, 1430], [1900, 1340, 1386], [2000, 1327, 1366], [2100, 1330, 1370], [2200, 1355, 1405],
  [2320, 1390, 1455], [2418, 1405, 1478]
];

const SVG = "http://www.w3.org/2000/svg";

function stroke(parent, d, color, width, dash) {
  const path = document.createElementNS(SVG, "path");
  path.setAttribute("d", d);
  path.setAttribute("stroke", color);
  path.setAttribute("stroke-width", width);
  if (dash) path.setAttribute("stroke-dasharray", dash);
  parent.appendChild(path);
}

const bands = document.getElementById("bands");
for (let i = 0; i <= 10; i++) {
  const edge = i === 0 || i === 10;
  const points = ribbon.map(([x, top, bottom]) => x + " " + (top + (bottom - top) * i / 10));
  const color = i === 10 ? "#5c1450" : i > 5 ? "#7a1a66" : "#193f70";
  stroke(bands, "M" + points.join("L"), color, edge ? 7 : 6, edge ? "" : "6 8");
}

const group = document.getElementById("candles");
const rows = candles.split(",").map(row => row.split(" ").map(Number));
for (const [up, wick, body] of [[true, "#205a17", "#62c846"], [false, "#6f0d08", "#e32d20"]]) {
  const set = rows.filter(row => (row[0] > 0) === up);
  stroke(group, set.map(([x, a, b]) => `M${Math.abs(x)} ${a}V${b}`).join(""), wick, 7);
  stroke(group, set.map(([x, , , a, b]) => `M${Math.abs(x)} ${a}V${b}`).join(""), body, 15);
}
```
